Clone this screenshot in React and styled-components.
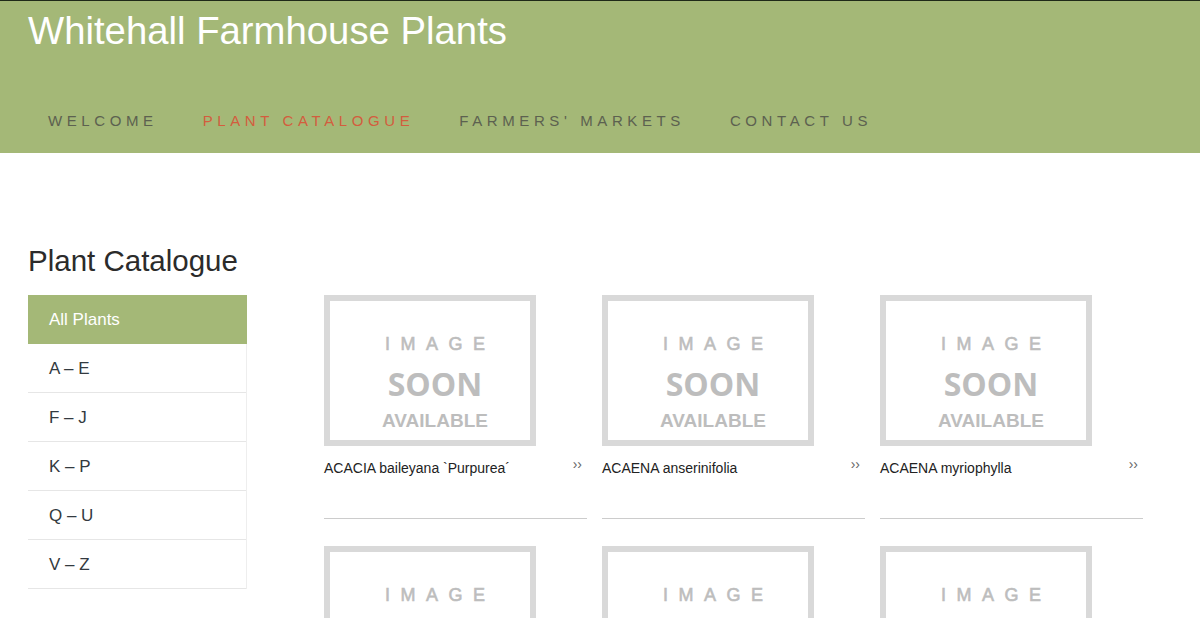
import styled, { createGlobalStyle } from "styled-components"

const GlobalStyle = createGlobalStyle`
    body {
        margin: 0;
        font-family: "Liberation Sans", Arial, sans-serif;
        background: #ffffff;
        color: #333333;
    }
`

const menu = [
    { label: "Welcome" },
    { label: "Plant Catalogue", active: true },
    { label: "Farmers' Markets" },
    { label: "Contact Us" },
]

const letters = ["All Plants", "A – E", "F – J", "K – P", "Q – U", "V – Z"]

const plants = [
    "ACACIA baileyana `Purpurea´",
    "ACAENA anserinifolia",
    "ACAENA myriophylla",
    "ACANTHUS mollis",
    "ACANTHUS spinosus",
    "ACHILLEA millefolium",
]

export default function App() {
    return (
        <>
            <GlobalStyle />
            <Header>
                <SiteTitle>Whitehall Farmhouse Plants</SiteTitle>
                <Nav>
                    {menu.map((m) => (
                        <NavLink key={m.label} $active={m.active}>{m.label}</NavLink>
                    ))}
                </Nav>
            </Header>
            <Main>
                <PageTitle>Plant Catalogue</PageTitle>
                <Layout>
                    <Sidebar>
                        {letters.map((l, i) => (
                            <SideItem key={l} $active={i === 0}>{l}</SideItem>
                        ))}
                    </Sidebar>
                    <Grid>
                        {plants.map((p) => (
                            <Card key={p}>
                                <Placeholder>
                                    <PhWord>IMAGE</PhWord>
                                    <PhSoon>SOON</PhSoon>
                                    <PhAvail>AVAILABLE</PhAvail>
                                </Placeholder>
                                <Caption>
                                    <span>{p}</span>
                                    <More>››</More>
                                </Caption>
                            </Card>
                        ))}
                    </Grid>
                </Layout>
            </Main>
        </>
    )
}

const Header = styled.header`
    background: #a4b877;
    border-top: 1px solid #1f2a18;
    height: 153px;
    box-sizing: border-box;
    padding: 0 28px;
`

const SiteTitle = styled.h1`
    margin: 0;
    padding-top: 9px;
    font-size: 38.3px;
    line-height: 42px;
    font-weight: 400;
    color: #ffffff;
`

const Nav = styled.nav`
    display: flex;
    gap: 45px;
    padding: 60px 0 0 20px;
`

const NavLink = styled.a`
    font-size: 15px;
    line-height: 18px;
    letter-spacing: 4.6px;
    text-transform: uppercase;
    color: ${(p) => (p.$active ? "#d35d3e" : "#5c6150")};
    cursor: pointer;
`

const Main = styled.main`
    padding: 91px 28px 0;
`

const PageTitle = styled.h2`
    margin: 0 0 17px;
    font-size: 29.5px;
    line-height: 34px;
    font-weight: 400;
    color: #2b2b2b;
`

const Layout = styled.div`
    display: flex;
    gap: 77px;
    align-items: flex-start;
`

const Sidebar = styled.ul`
    list-style: none;
    margin: 0;
    padding: 0;
    width: 219px;
    flex-shrink: 0;
    border-right: 1px solid #eeeeee;
    box-sizing: border-box;
`

const SideItem = styled.li`
    height: 49px;
    box-sizing: border-box;
    padding: 16px 0 0 21px;
    font-size: 17px;
    line-height: 18px;
    color: ${(p) => (p.$active ? "#ffffff" : "#333a40")};
    background: ${(p) => (p.$active ? "#a4b877" : "#ffffff")};
    border-bottom: 1px solid ${(p) => (p.$active ? "#a4b877" : "#e6e6e6")};
    margin-right: ${(p) => (p.$active ? "-1px" : "0")};
`

const Grid = styled.div`
    display: grid;
    grid-template-columns: repeat(3, 263px);
    column-gap: 15px;
    row-gap: 27px;
`

const Card = styled.div`
    border-bottom: 1px solid #cccccc;
`

const Placeholder = styled.div`
    width: 212px;
    height: 151px;
    box-sizing: border-box;
    border: 6px solid #d9d9d9;
    display: flex;
    flex-direction: column;
    align-items: center;
    padding: 33px 0 0 10px;
    color: #bdbdbd;
    font-weight: 700;
`

const PhWord = styled.div`
    font-size: 18px;
    line-height: 20px;
    letter-spacing: 10.5px;
    margin-right: -10.5px;
    font-weight: 400;
    -webkit-text-stroke: 0.6px #bdbdbd;
`

const PhSoon = styled.div`
    font-family: "Open Sans", sans-serif;
    font-size: 32px;
    line-height: 38px;
    margin-top: 11px;
`

const PhAvail = styled.div`
    font-size: 19px;
    line-height: 22px;
    margin-top: 7px;
`

const Caption = styled.div`
    display: flex;
    justify-content: space-between;
    padding: 14px 5px 0 0;
    height: 72px;
    box-sizing: border-box;
    font-size: 14px;
    line-height: 16px;
    color: #222222;
`

const More = styled.span`
    font-size: 14px;
    line-height: 10px;
    color: #666666;
    margin-top: -1px;
`
